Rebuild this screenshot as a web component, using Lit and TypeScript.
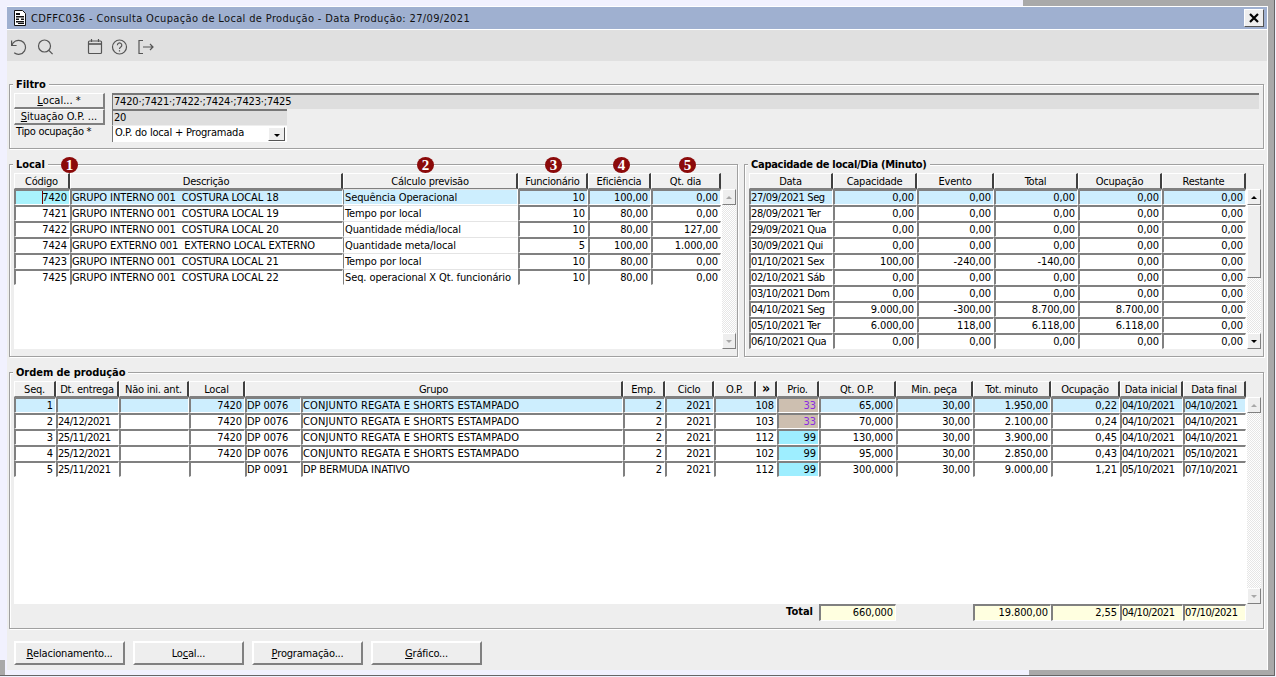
import { LitElement, html, css } from "lit";
import { customElement } from "lit/decorators.js";

const sum = (a: number[]) => a.reduce((x, y) => x + y, 0);
const tpl = (a: number[]) => a.map((n) => n + "px").join(" ");

const LOCAL_COLS = [56, 273, 175, 70, 63, 70];
const LOCAL_HEAD = ["Código", "Descrição", "Cálculo previsão", "Funcionário", "Eficiência", "Qt. dia"];
const LOCAL_ROWS = [
  ["7420", "GRUPO INTERNO 001  COSTURA LOCAL 18", "Sequência Operacional", "10", "100,00", "0,00"],
  ["7421", "GRUPO INTERNO 001  COSTURA LOCAL 19", "Tempo por local", "10", "80,00", "0,00"],
  ["7422", "GRUPO INTERNO 001  COSTURA LOCAL 20", "Quantidade média/local", "10", "80,00", "127,00"],
  ["7424", "GRUPO EXTERNO 001  EXTERNO LOCAL EXTERNO", "Quantidade meta/local", "5", "100,00", "1.000,00"],
  ["7423", "GRUPO INTERNO 001  COSTURA LOCAL 21", "Tempo por local", "10", "80,00", "0,00"],
  ["7425", "GRUPO INTERNO 001  COSTURA LOCAL 22", "Seq. operacional X Qt. funcionário", "10", "80,00", "0,00"],
];
const BADGES = [51, 407, 535, 603, 669];

const CAP_COLS = [84, 84, 77, 84, 84, 84];
const CAP_HEAD = ["Data", "Capacidade", "Evento", "Total", "Ocupação", "Restante"];
const CAP_ROWS = [
  ["27/09/2021 Seg", "0,00", "0,00", "0,00", "0,00", "0,00"],
  ["28/09/2021 Ter", "0,00", "0,00", "0,00", "0,00", "0,00"],
  ["29/09/2021 Qua", "0,00", "0,00", "0,00", "0,00", "0,00"],
  ["30/09/2021 Qui", "0,00", "0,00", "0,00", "0,00", "0,00"],
  ["01/10/2021 Sex", "100,00", "-240,00", "-140,00", "0,00", "0,00"],
  ["02/10/2021 Sáb", "0,00", "0,00", "0,00", "0,00", "0,00"],
  ["03/10/2021 Dom", "0,00", "0,00", "0,00", "0,00", "0,00"],
  ["04/10/2021 Seg", "9.000,00", "-300,00", "8.700,00", "8.700,00", "0,00"],
  ["05/10/2021 Ter", "6.000,00", "118,00", "6.118,00", "6.118,00", "0,00"],
  ["06/10/2021 Qua", "0,00", "0,00", "0,00", "0,00", "0,00"],
];

const ORD_COLS = [42, 63, 70, 56, 56, 322, 42, 49, 42, 21, 42, 77, 77, 78, 69, 63, 63];
const ORD_HEAD: [string, number][] = [
  ["Seq.", 1], ["Dt. entrega", 1], ["Não ini. ant.", 1], ["Local", 1], ["Grupo", 2], ["Emp.", 1], ["Ciclo", 1],
  ["O.P.", 1], ["»", 1], ["Prio.", 1], ["Qt. O.P.", 1], ["Min. peça", 1], ["Tot. minuto", 1], ["Ocupação", 1],
  ["Data inicial", 1], ["Data final", 1],
];
const G = "CONJUNTO REGATA E SHORTS ESTAMPADO";
const ORD_ROWS = [
  ["1", "", "", "7420", "DP 0076", G, "2", "2021", "108", "33", "65,000", "30,00", "1.950,00", "0,22", "04/10/2021", "04/10/2021"],
  ["2", "24/12/2021", "", "7420", "DP 0076", G, "2", "2021", "103", "33", "70,000", "30,00", "2.100,00", "0,24", "04/10/2021", "04/10/2021"],
  ["3", "25/11/2021", "", "7420", "DP 0076", G, "2", "2021", "112", "99", "130,000", "30,00", "3.900,00", "0,45", "04/10/2021", "04/10/2021"],
  ["4", "25/12/2021", "", "7420", "DP 0076", G, "2", "2021", "102", "99", "95,000", "30,00", "2.850,00", "0,43", "04/10/2021", "05/10/2021"],
  ["5", "25/11/2021", "", "", "DP 0091", "DP BERMUDA INATIVO", "2", "2021", "112", "99", "300,000", "30,00", "9.000,00", "1,21", "05/10/2021", "07/10/2021"],
];
const ORD_LEFT = new Set([1, 2, 4, 5, 14, 15]);
const ORD_DATE = new Set([1, 14, 15]);

@customElement("app-root")
export class AppRoot extends LitElement {
  static styles = css`
    :host {
      display: block;
      position: relative;
      width: 1276px;
      height: 677px;
      overflow: hidden;
      box-sizing: border-box;
      padding: 6px 0 0 7px;
      background: #f1f1fe;
      font-family: "DejaVu Sans", sans-serif;
      font-stretch: condensed;
      font-size: 11px;
      line-height: 13px;
      color: #000;
    }
    .d { position: absolute; background: #a9a9a9; }
    .d-top { left: 1023px; top: 0; width: 251px; height: 6px; }
    .d-right { left: 1268px; top: 0; width: 6px; height: 675px; }
    .d-bottom { left: 1029px; top: 670px; width: 245px; height: 5px; }
    .d-left { left: 0; top: 660px; width: 5px; height: 15px; }
    .d-hline { left: 0; top: 675px; width: 1275px; height: 1px; background: #666; }
    .d-vline { left: 1274px; top: 0; width: 1px; height: 676px; background: #666; }

    .win {
      width: 1261px;
      height: 664px;
      box-sizing: border-box;
      background: #eee;
      border-top: 1px solid #fff;
      border-right: 1px solid #fff;
      display: flex;
      flex-direction: column;
    }
    .title {
      height: 23px;
      box-sizing: border-box;
      background: #9fb0d0;
      border-bottom: 1px solid #fff;
      display: flex;
      align-items: center;
      padding: 0 3px 0 6px;
      gap: 4px;
    }
    .title svg { display: block; }
    .title span { flex: 1; letter-spacing: 0.35px; color: #111; }
    .close {
      width: 20px;
      height: 18px;
      box-sizing: border-box;
      background: #eee;
      border: 1px solid;
      border-color: #fff #555 #555 #fff;
      display: flex;
      align-items: center;
      justify-content: center;
    }
    .tools {
      height: 31px;
      box-sizing: border-box;
      background: #e0e0e0;
      display: flex;
      padding: 8px 0 0 3px;
    }
    .tools svg { width: 18px; height: 18px; display: block; fill: none; stroke: #555; stroke-width: 1.2; }
    .t-search { margin-left: 8px; }
    .t-cal { margin-left: 32px; }
    .t-help { margin-left: 7px; }
    .t-exit { margin-left: 8px; }

    .body { flex: 1; display: flex; flex-direction: column; padding: 23px 0 0 2px; }
    .fs {
      position: relative;
      box-sizing: border-box;
      border: 1px solid #a0a0a0;
      box-shadow: 1px 1px 0 #fff, inset 1px 1px 0 #fff;
      padding: 8px 4px 7px;
      width: 1255px;
    }
    .legend {
      position: absolute;
      top: -7px;
      left: 3px;
      padding: 0 3px;
      background: #eee;
      font-weight: 700;
      letter-spacing: -0.05px;
    }
    .legend-tight { letter-spacing: -0.28px; }
    .gap { margin-top: 15px; }
    .two { display: flex; gap: 6px; }
    .fs-local { width: 729px; height: 193px; }
    .fs-cap { width: 520px; height: 193px; }
    .fs-ord { width: 1255px; height: 257px; }
    .badge {
      position: absolute;
      top: -8px;
      width: 17px;
      height: 16px;
      border-radius: 50%;
      background: #8b0a0a;
      color: #fff;
      font: 700 15px/16px "Liberation Serif", serif;
      text-align: center;
    }

    .f-row { display: flex; height: 16px; gap: 7px; }
    .f-label { width: 98px; box-sizing: border-box; margin-right: -7px; padding-left: 2px; flex: none; letter-spacing: -0.3px; }
    .btn {
      box-sizing: border-box;
      background: #eee;
      border: 2px solid;
      border-color: #fff #808080 #808080 #fff;
      display: flex;
      align-items: center;
      justify-content: center;
      white-space: pre;
    }
    .btn-s { width: 91px; height: 16px; border-width: 1px 2px 2px 1px; }
    .inp {
      box-sizing: border-box;
      background: #dedede;
      border-top: 2px solid #777;
      border-left: 1px solid #777;
      padding: 0 1px;
      height: 16px;
      line-height: 13px;
      letter-spacing: -0.18px;
    }
    .grow { flex: 1; }
    .w175 { width: 175px; }
    .sel-box {
      box-sizing: border-box;
      width: 175px;
      height: 17px;
      background: #fff;
      border-left: 1px solid #777;
      border-top: 1px solid #eee;
      display: flex;
      justify-content: space-between;
      padding: 0 2px 0 2px;
      letter-spacing: -0.2px;
    }
    .sel-btn {
      box-sizing: border-box;
      width: 17px;
      height: 14px;
      margin-top: 1px;
      background: #eee;
      border: 1px solid;
      border-color: #fff #555 #555 #fff;
    }
    .sel-arrow {
      margin: 6px 0 0 5px;
      width: 0;
      height: 0;
      border: 3px solid transparent;
      border-top-color: #000;
      border-bottom: 0;
    }

    .grid { display: grid; grid-auto-rows: 16px; }
    .h {
      box-sizing: border-box;
      background: #f0f0f0;
      border-top: 1px solid #fff;
      border-left: 1px solid #fff;
      border-right: 2px solid #404040;
      border-bottom: 1px solid #808080;
      padding-top: 1px;
      text-align: center;
      white-space: pre;
      overflow: hidden;
      letter-spacing: -0.25px;
    }
    .h-big { font-size: 14px; line-height: 11px; font-weight: 700; }
    .span2 { grid-column: span 2; }
    .rows-wrap { display: flex; }
    .area { background: #fff; flex: none; }
    .c {
      box-sizing: border-box;
      border-top: 2px solid #808080;
      border-left: 2px solid #808080;
      border-right: 1px solid #fff;
      border-bottom: 1px solid #fff;
      padding: 0 2px 0 0;
      line-height: 13px;
      white-space: pre;
      overflow: hidden;
      background: #fff;
      letter-spacing: -0.1px;
    }
    .r { text-align: right; }
    .l { padding: 0; }
    .date { letter-spacing: -0.45px; }
    .capdate { letter-spacing: -0.36px; }
    .conj { letter-spacing: 0.14px; }
    .bermuda { letter-spacing: -0.15px; }
    .sel { background: #cdeefe; }
    .cur { background: #a9f3fd; }
    .soft { border-top: 1px solid #e4e4e4; border-left-width: 1px; padding-top: 1px; padding-left: 1px; }
    .p33 { background: #cdbfb0; color: #8a2be2; }
    .p99 { background: #9eeeff; }
    .caret { display: inline-block; width: 1px; height: 13px; margin-right: -1px; background: #700; vertical-align: top; }
    .y { background: #ffffe0; }
    .none { background: transparent; border: 0; padding: 0; }
    .tot-l { font-weight: 700; text-align: right; padding: 1px 6px 0 0; background: transparent; }

    .sb {
      width: 14px;
      flex: none;
      display: flex;
      flex-direction: column;
      background: repeating-conic-gradient(#fff 0 25%, #e6e6e6 0 50%) 0 0 / 2px 2px;
    }
    .sb-b {
      box-sizing: border-box;
      width: 14px;
      height: 16px;
      background: #eee;
      border: 1px solid;
      border-color: #fff #808080 #808080 #fff;
      display: flex;
      align-items: center;
      justify-content: center;
    }
    .sb-sp { flex: 1; }
    .thumb { box-sizing: border-box; height: 73px; background: #eee; border: 1px solid; border-color: #fff #808080 #808080 #fff; }
    .up { width: 0; height: 0; border: 3px solid transparent; border-top: 0; border-bottom-color: #000; }
    .dn { width: 0; height: 0; border: 3px solid transparent; border-bottom: 0; border-top-color: #000; }
    .g.up { border-bottom-color: #a8a8a8; }
    .g.dn { border-top-color: #a8a8a8; }

    .total { grid-auto-rows: 17px; }
    .actions { display: flex; gap: 8px; padding: 12px 0 0 5px; }
    .btn-l { width: 111px; height: 24px; letter-spacing: -0.2px; }
  `;

  private sb(active: boolean) {
    const g = active ? "" : "g";
    return html`<div class="sb">
      <div class="sb-b"><div class="up ${g}"></div></div>
      ${active ? html`<div class="thumb"></div>` : ""}
      <div class="sb-sp"></div>
      <div class="sb-b"><div class="dn ${g}"></div></div>
    </div>`;
  }

  private table(cols: number[], head: unknown, rows: unknown, height: number, active: boolean) {
    const w = sum(cols);
    return html`<div class="grid" style="grid-template-columns:${tpl(cols)}">${head}</div>
      <div class="rows-wrap">
        <div class="area" style="width:${w + 1}px;height:${height}px">
          <div class="grid" style="grid-template-columns:${tpl(cols)}">${rows}</div>
        </div>
        ${this.sb(active)}
      </div>`;
  }

  private localTable() {
    const head = LOCAL_HEAD.map((h) => html`<div class="h">${h}</div>`);
    const rows = LOCAL_ROWS.map((row, i) =>
      row.map((v, j) => {
        const left = j === 1 || j === 2;
        const cls = ["c", left ? "l" : "r", i === 0 ? (j === 0 ? "cur" : "sel") : "", j === 2 ? "soft" : ""].join(" ");
        return html`<div class=${cls}>${i === 0 && j === 0 ? html`<span class="caret"></span>` : ""}${v}</div>`;
      })
    );
    return this.table(LOCAL_COLS, head, rows, 160, false);
  }

  private capTable() {
    const head = CAP_HEAD.map((h) => html`<div class="h">${h}</div>`);
    const rows = CAP_ROWS.map((row, i) =>
      row.map((v, j) => html`<div class="c ${j === 0 ? "l capdate" : "r"} ${i === 0 ? "sel" : ""}">${v}</div>`)
    );
    return this.table(CAP_COLS, head, rows, 160, true);
  }

  private ordTable() {
    const head = ORD_HEAD.map(
      ([h, s]) => html`<div class="h ${s === 2 ? "span2" : ""} ${h === "»" ? "h-big" : ""}">${h}</div>`
    );
    const rows = ORD_ROWS.map((row, i) =>
      row.map((v, j) => {
        let extra = i === 0 ? "sel" : "";
        if (j === 9) extra = v === "33" ? "p33" : "p99";
        if (j === 8) extra += " span2";
        if (ORD_DATE.has(j)) extra += " date";
        if (j === 5) extra += v === G ? " conj" : " bermuda";
        return html`<div class="c ${ORD_LEFT.has(j) ? "l" : "r"} ${extra}">${v}</div>`;
      })
    );
    return this.table(ORD_COLS, head, rows, 207, false);
  }

  private totals() {
    // track index → content in the order table's column grid
    const slots: Record<number, string> = { 11: "660,000", 13: "19.800,00", 14: "2,55", 15: "04/10/2021", 16: "07/10/2021" };
    return html`<div class="grid total" style="grid-template-columns:${tpl(ORD_COLS)}">
      ${ORD_COLS.map((_, i) => {
        if (i === 10) return html`<div class="tot-l">Total</div>`;
        if (slots[i]) return html`<div class="c y ${i >= 15 ? "l date" : "r"}">${slots[i]}</div>`;
        return html`<div class="none"></div>`;
      })}
    </div>`;
  }

  render() {
    return html`
      <div class="d d-top"></div><div class="d d-right"></div><div class="d d-bottom"></div><div class="d d-left"></div>
      <div class="d d-hline"></div><div class="d d-vline"></div>
      <div class="win">
        <div class="title">
          <svg width="14" height="16" viewBox="0 0 14 16">
            <path d="M1.5.5h8l3 3v12h-11z" fill="#fff" stroke="#111"/>
            <path d="M3 3h4v2H3zM3 6h8v1.5H3zM3 8.5h3v1.5H3zM8 8.5h3v1.5H8zM3 11h8v1.5H3zM5 13h6v1H5z" fill="#111"/>
          </svg>
          <span>CDFFC036 - Consulta Ocupação de Local de Produção - Data Produção: 27/09/2021</span>
          <div class="close">
            <svg width="12" height="12" viewBox="0 0 12 12"><path d="M2 2l8 8M10 2l-8 8" stroke="#000" stroke-width="2.2" fill="none"/></svg>
          </div>
        </div>
        <div class="tools">
          <svg viewBox="0 0 18 18"><path d="M1.6 2.5v5h5"/><path d="M1.8 7.5A7 7 0 1 1 4.2 14.8"/></svg>
          <svg class="t-search" viewBox="0 0 18 18"><circle cx="8.5" cy="8" r="6"/><path d="M13 12.5l3.6 3.6"/></svg>
          <svg class="t-cal" viewBox="0 0 18 18"><rect x="2.5" y="3" width="13" height="12.5" rx="1"/><path d="M2.5 6h13" stroke-width="1.6"/><path d="M5.5 1v3M12.5 1v3"/></svg>
          <svg class="t-help" viewBox="0 0 18 18"><circle cx="8.5" cy="9" r="7"/><path d="M6.4 7.2a2.2 2.2 0 1 1 3.4 1.8c-.9.6-1.3 1-1.3 2"/><path d="M8.5 12.2v1.3"/></svg>
          <svg class="t-exit" viewBox="0 0 18 18"><path d="M6 2.5H2v13h4"/><path d="M6 9h10M13 6l3 3-3 3"/></svg>
        </div>
        <div class="body">
          <div class="fs">
            <div class="legend">Filtro</div>
            <div class="f-row">
              <div class="btn btn-s"><u>L</u>ocal... *</div>
              <div class="inp grow">7420·;7421·;7422·;7424·;7423·;7425</div>
            </div>
            <div class="f-row">
              <div class="btn btn-s"><u>S</u>ituação O.P. ...</div>
              <div class="inp w175">20</div>
            </div>
            <div class="f-row">
              <div class="f-label">Tipo ocupação *</div>
              <div class="sel-box">O.P. do local + Programada<div class="sel-btn"><div class="sel-arrow"></div></div></div>
            </div>
          </div>
          <div class="two gap">
            <div class="fs fs-local">
              <div class="legend">Local</div>
              ${BADGES.map((x, i) => html`<div class="badge" style="left:${x}px">${i + 1}</div>`)}
              ${this.localTable()}
            </div>
            <div class="fs fs-cap">
              <div class="legend legend-tight">Capacidade de local/Dia (Minuto)</div>
              ${this.capTable()}
            </div>
          </div>
          <div class="fs fs-ord gap">
            <div class="legend">Ordem de produção</div>
            ${this.ordTable()}
            ${this.totals()}
          </div>
          <div class="actions">
            <div class="btn btn-l"><u>R</u>elacionamento...</div>
            <div class="btn btn-l">Lo<u>c</u>al...</div>
            <div class="btn btn-l"><u>P</u>rogramação...</div>
            <div class="btn btn-l"><u>G</u>ráfico...</div>
          </div>
        </div>
      </div>
    `;
  }
}
